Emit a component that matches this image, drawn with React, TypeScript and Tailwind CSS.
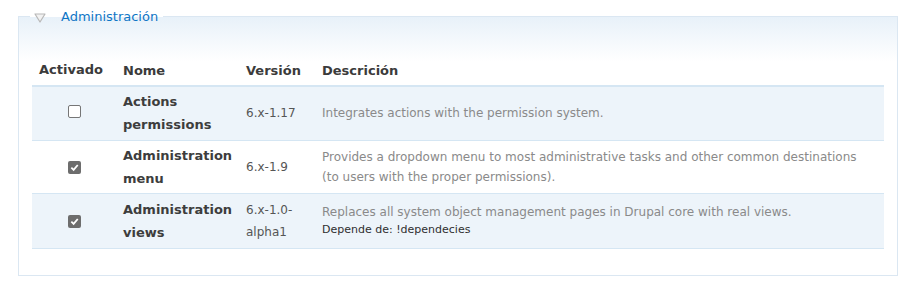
import React from "react";

const rows = [
  {
    checked: false,
    name: ["Actions", "permissions"],
    version: "6.x-1.17",
    desc: "Integrates actions with the permission system.",
    dep: null as string | null,
    bg: "bg-[#edf4fa]",
  },
  {
    checked: true,
    name: ["Administration", "menu"],
    version: "6.x-1.9",
    desc: "Provides a dropdown menu to most administrative tasks and other common destinations (to users with the proper permissions).",
    dep: null,
    bg: "bg-white",
  },
  {
    checked: true,
    name: ["Administration", "views"],
    version: "6.x-1.0-alpha1",
    desc: "Replaces all system object management pages in Drupal core with real views.",
    dep: "Depende de: !dependecies",
    bg: "bg-[#edf4fa]",
  },
];

function Checkbox({ checked }: { checked: boolean }) {
  if (checked) {
    return (
      <span className="inline-flex h-[13px] w-[13px] items-center justify-center rounded-[2px] bg-[#6d6d6d]">
        <svg width="9" height="9" viewBox="0 0 10 10">
          <path d="M1.5 5.2 L4 7.6 L8.6 2.2" fill="none" stroke="white" strokeWidth="2" />
        </svg>
      </span>
    );
  }
  return <span className="inline-block h-[13px] w-[13px] rounded-[2px] border border-[#767676] bg-white" />;
}

export default function App() {
  return (
    <div className="bg-white w-[916px] h-[288px] pt-[7px] px-[18px]" style={{ fontFamily: '"DejaVu Sans", Verdana, sans-serif' }}>
      <fieldset className="m-0 w-[880px] h-[269px] border border-[#dbe7f2] bg-[linear-gradient(to_bottom,#e8f1f9_0px,#ffffff_45px,#ffffff_100%)] px-[13px] pb-0 pt-0">
        <legend className="-ml-[2px] flex items-center px-[2px]">
          <svg width="12" height="10" viewBox="0 0 12 10" className="ml-[2px] mr-[15px] mt-[2px]">
            <path d="M1 1 L11 1 L6 9 Z" fill="#f2f2f2" stroke="#b8b8b8" strokeWidth="1.2" strokeLinejoin="round" />
          </svg>
          <span className="text-[13px] text-[#0f76c6] pr-[3px]">Administración</span>
        </legend>
        <table className="mt-[31px] w-[852px] border-collapse text-[12px]">
          <thead>
            <tr className="border-b-[2px] border-[#d5e6f3]">
              <th className="h-[28px] w-[91px] pl-[7px] pb-[2px] text-left align-middle text-[13px] font-bold text-[#3b3b3b]">Activado</th>
              <th className="w-[123px] pl-0 text-left text-[13px] font-bold text-[#3b3b3b]">Nome</th>
              <th className="w-[76px] text-left text-[13px] font-bold text-[#3b3b3b]">Versión</th>
              <th className="text-left text-[13px] font-bold text-[#3b3b3b]">Descrición</th>
            </tr>
          </thead>
          <tbody>
            {rows.map((r, i) => (
              <tr key={i} className={`${r.bg} border-b border-[#d5e6f3]`}>
                <td className={`${i === 1 ? "h-[53px]" : "h-[55px]"} text-center align-middle pr-[7px]`}>
                  <span className="relative top-[1px] inline-flex">
                    <Checkbox checked={r.checked} />
                  </span>
                </td>
                <td className="align-middle text-[13px] font-bold leading-[23px] text-[#3d3d3d]">
                  {r.name[0]}
                  <br />
                  {r.name[1]}
                </td>
                <td className="align-middle leading-[22px] text-[#555] pr-[4px]">
                  {r.version.includes("alpha") ? (
                    <>
                      6.x-1.0-
                      <br />
                      alpha1
                    </>
                  ) : (
                    r.version
                  )}
                </td>
                <td className="align-middle pr-[10px] leading-[20px] text-[#8a8a8a]">
                  {r.dep ? (
                    <div className="-mt-[2px]">
                      <div>{r.desc}</div>
                      <div className="text-[11px] leading-[16px] text-[#2f2f2f]">{r.dep}</div>
                    </div>
                  ) : (
                    r.desc
                  )}
                </td>
              </tr>
            ))}
          </tbody>
        </table>
      </fieldset>
    </div>
  );
}
